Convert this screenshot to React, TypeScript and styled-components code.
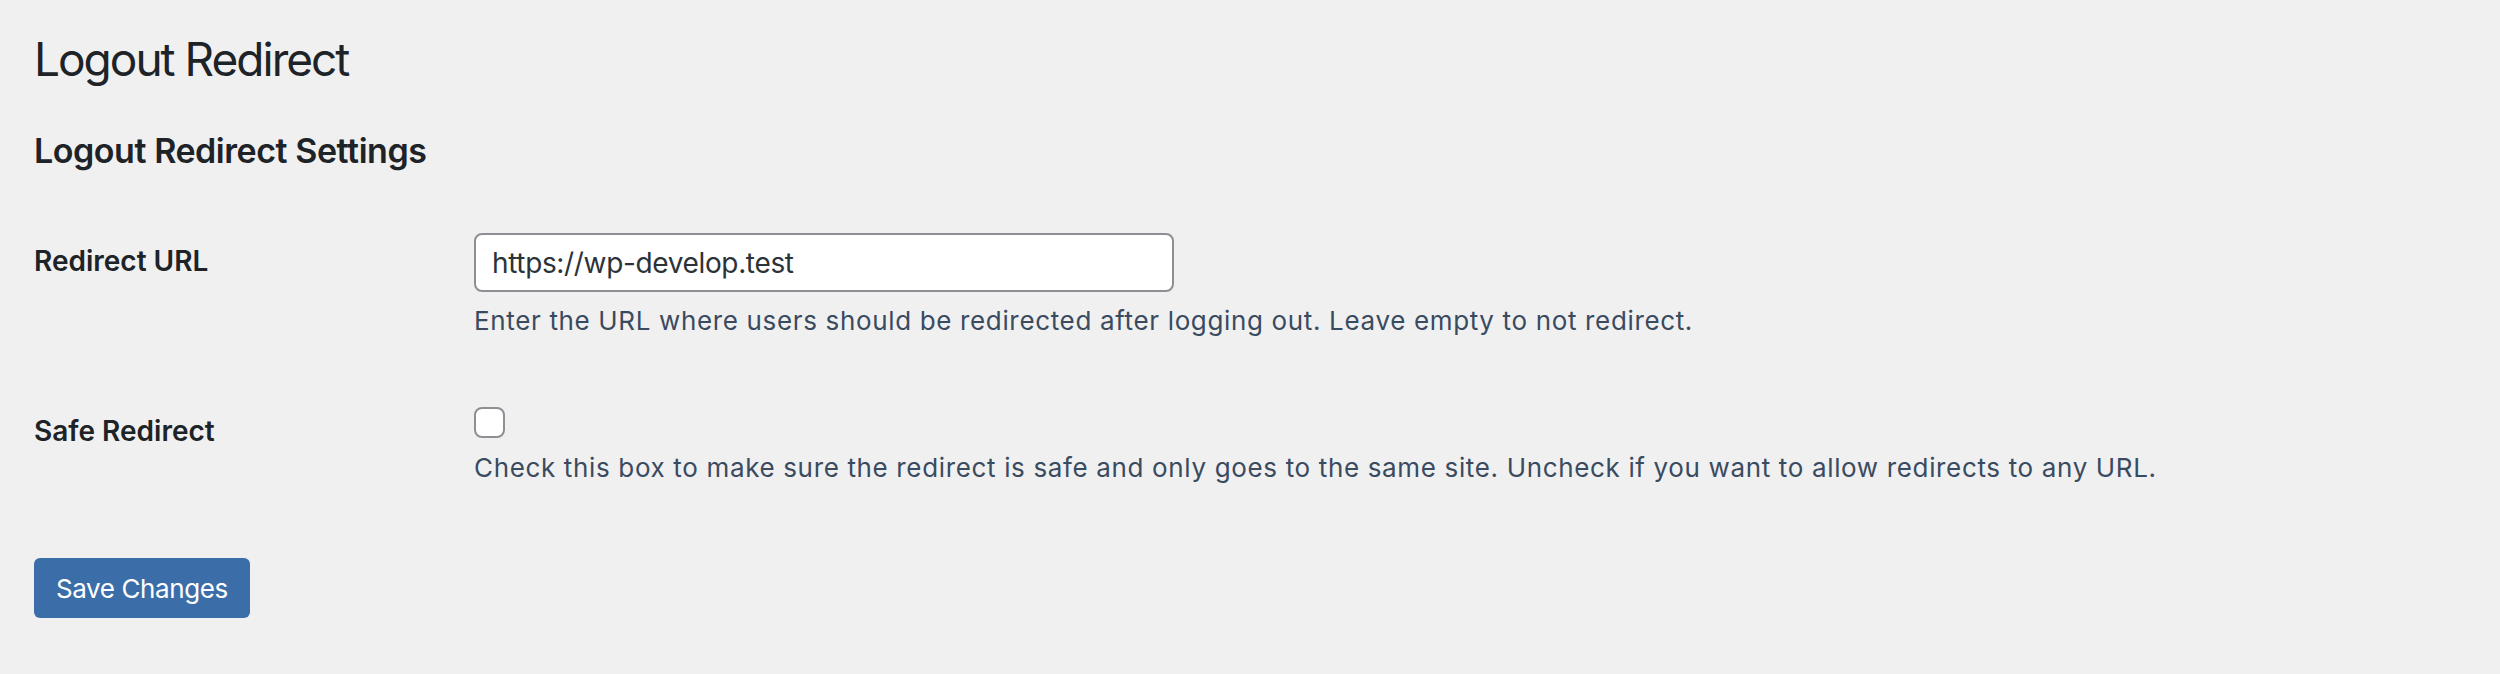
import React from "react";
import styled, { createGlobalStyle } from "styled-components";

const GlobalStyle = createGlobalStyle`
  html, body {
    margin: 0;
    padding: 0;
    background: #f0f0f1;
  }
  body {
    font-family: Inter, "Noto Sans", "Liberation Sans", sans-serif;
    color: #1d2327;
  }
`;

const Page = styled.div`
  box-sizing: border-box;
  min-height: 674px;
  padding: 29px 34px 40px 34px;
  background: #f0f0f1;
`;

const Title = styled.h1`
  margin: 0;
  font-size: 46px;
  font-weight: 400;
  line-height: 60px;
  letter-spacing: -2px;
  color: #1d2327;
`;

const SectionTitle = styled.h2`
  margin: 40px 0 0 0;
  font-size: 34px;
  font-weight: 600;
  line-height: 44px;
  letter-spacing: -0.45px;
  color: #1d2327;
`;

const FormTable = styled.div`
  margin-top: 30px;
  display: flex;
  flex-direction: column;
`;

const Row = styled.div<{ $gapTop?: number }>`
  display: grid;
  grid-template-columns: 420px 1fr;
  margin-top: ${(p) => p.$gapTop ?? 0}px;
`;

const Label = styled.label`
  padding: 40px 20px 40px 0;
  font-size: 28px;
  font-weight: 600;
  line-height: 36px;
  color: #1d2327;
`;

const Field = styled.div<{ $padTop: number }>`
  padding: ${(p) => p.$padTop}px 20px 30px 20px;
  display: flex;
  flex-direction: column;
  align-items: flex-start;
`;

const TextInput = styled.input`
  box-sizing: border-box;
  width: 700px;
  height: 59px;
  margin: 0;
  padding: 0 16px;
  border: 2px solid #8c8f94;
  border-radius: 8px;
  background: #ffffff;
  font-family: Inter, "Noto Sans", "Liberation Sans", sans-serif;
  font-size: 28px;
  letter-spacing: -0.35px;
  color: #2c3338;
  outline: none;
`;

const Checkbox = styled.input`
  appearance: none;
  -webkit-appearance: none;
  box-sizing: border-box;
  width: 31px;
  height: 31px;
  margin: 0;
  border: 2px solid #8c8f94;
  border-radius: 8px;
  background: #ffffff;
`;

const Description = styled.p<{ $mt: number }>`
  margin: ${(p) => p.$mt}px 0 0 0;
  font-size: 26px;
  line-height: 39px;
  letter-spacing: 0.65px;
  color: #3a4b5f;
`;

const Submit = styled.div`
  margin-top: 41px;
`;

const PrimaryButton = styled.button`
  box-sizing: border-box;
  height: 60px;
  padding: 0 22px;
  border: none;
  border-radius: 6px;
  background: #3b6ea8;
  color: #ffffff;
  font-family: Inter, "Noto Sans", "Liberation Sans", sans-serif;
  font-size: 26px;
  font-weight: 400;
  letter-spacing: -0.4px;
  cursor: pointer;
`;

export default function App() {
  return (
    <>
      <GlobalStyle />
      <Page>
        <Title>Logout Redirect</Title>
        <SectionTitle>Logout Redirect Settings</SectionTitle>
        <FormTable>
          <Row>
            <Label htmlFor="redirect-url">Redirect URL</Label>
            <Field $padTop={30}>
              <TextInput
                id="redirect-url"
                type="text"
                defaultValue="https://wp-develop.test"
              />
              <Description $mt={9}>
                Enter the URL where users should be redirected after logging
                out. Leave empty to not redirect.
              </Description>
            </Field>
          </Row>
          <Row $gapTop={3}>
            <Label htmlFor="safe-redirect">Safe Redirect</Label>
            <Field $padTop={34}>
              <Checkbox id="safe-redirect" type="checkbox" />
              <Description $mt={10}>
                Check this box to make sure the redirect is safe and only goes
                to the same site. Uncheck if you want to allow redirects to any
                URL.
              </Description>
            </Field>
          </Row>
        </FormTable>
        <Submit>
          <PrimaryButton type="button">Save Changes</PrimaryButton>
        </Submit>
      </Page>
    </>
  );
}
